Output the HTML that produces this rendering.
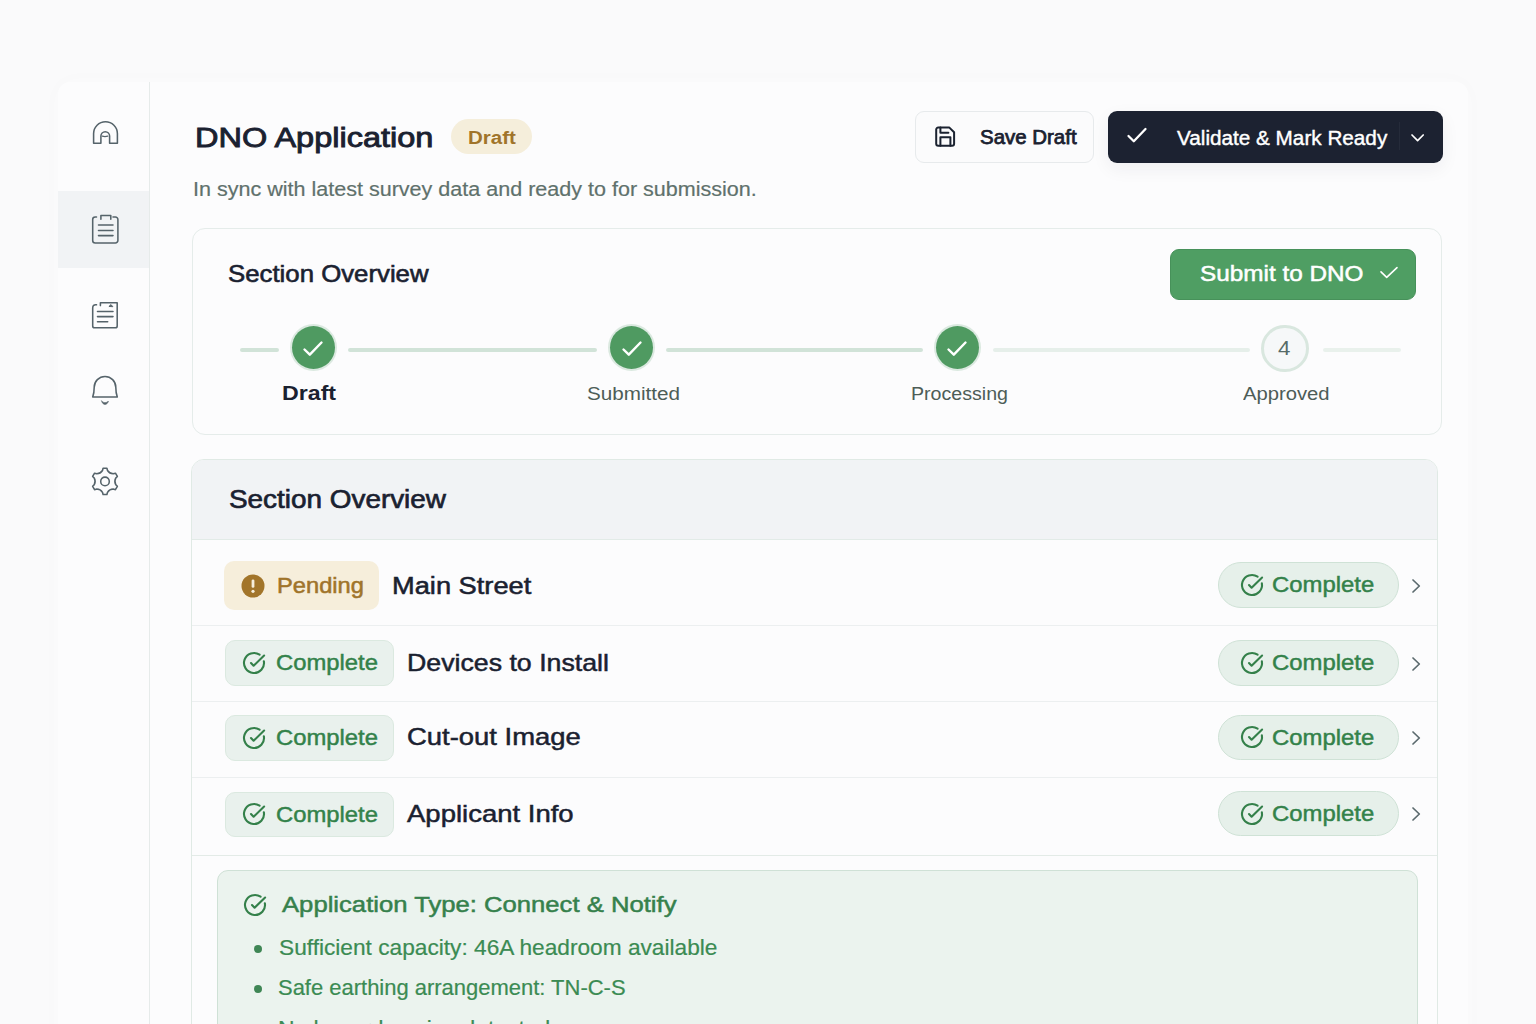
<!DOCTYPE html>
<html lang="en">
<head>
<meta charset="utf-8">
<title>DNO Application</title>
<style>
*{box-sizing:border-box;margin:0;padding:0}
html,body{width:1536px;height:1024px;overflow:hidden}
body{background:#fafafb;font-family:"Liberation Sans",sans-serif;color:#1b2230;position:relative}
.abs{position:absolute}
.t{position:absolute;white-space:nowrap;line-height:1;transform-origin:0 50%}
svg{display:block;overflow:visible;position:absolute}
.si{fill:none;stroke:#55636a;stroke-width:1.55;stroke-linejoin:round;stroke-linecap:round}
#shell{left:58px;top:82px;width:1410px;height:1000px;background:#fcfcfd;border-radius:12px 12px 0 0;box-shadow:0 0 24px 4px rgba(140,145,160,.012)}
#side{left:0;top:0;width:92px;height:1000px;border-right:1px solid #e6ebea;border-radius:12px 0 0 0}
#active{left:0;top:109px;width:91px;height:77px;background:#f1f3f5}
.step{width:43.400px;height:43.400px;border-radius:50%;background:#4f9a61;box-shadow:0 0 0 2px #dbe9e0}
.ln{height:4px;border-radius:2px;top:347.500px}
.lb{left:225px;width:169px;height:45.500px;border-radius:10px;background:#e9f1ed;border:1px solid #dbe9e0}
.rp{left:1218px;width:180.500px;height:46px;border-radius:23px;background:#e6f0ea;border:1px solid #cfe2d6}
.dv{left:0;width:1246px;height:1px;background:#eceff0}
.dot{left:254px;width:8px;height:8px;border-radius:50%;background:#3f8655}
.cc{fill:none;stroke:#34804a;stroke-width:2.100;stroke-linecap:round;stroke-linejoin:round}
.chev{fill:none;stroke:#5b6a6e;stroke-width:1.700;stroke-linecap:round;stroke-linejoin:round}
</style>
</head>
<body>

<div id="shell" class="abs">
  <div id="side" class="abs"><div id="active" class="abs"></div></div>
</div>

<!-- sidebar icons -->
<svg class="si" style="left:92px;top:120px" width="27" height="25" viewBox="0 0 27 25"><path d="M1.600 23.300V13.600A11.900 11.900 0 0 1 25.400 13.600V23.300H17.600V16A4.350 4.350 0 0 0 8.900 16V23.300Z"/><path d="M10.300 16.200q2.700 .9 5.400 0" stroke-width="1.400"/></svg>
<svg class="si" style="left:91px;top:213px" width="28" height="32" viewBox="0 0 28 32"><path d="M5.500 4H4.200A2.500 2.500 0 0 0 1.700 6.500V27.400A2.500 2.500 0 0 0 4.200 29.900H24.400A2.500 2.500 0 0 0 26.900 27.400V6.500A2.500 2.500 0 0 0 24.400 4H22"/><path d="M9.900 6.300V2.500H19.800V6.300"/><path d="M7.500 11.900H22M7.500 17.500H22M7.500 22.600H22"/></svg>
<svg class="si" style="left:91px;top:301px" width="28" height="29" viewBox="0 0 28 29"><path d="M5.500 3.800Q1.700 3.200 1.700 7V25A1.800 1.800 0 0 0 3.500 26.800H24.400A1.800 1.800 0 0 0 26.200 25V1.800H9.400V4.600"/><path d="M18.200 5.200l1.800-1.600 1.600 1.800z" fill="#55636a" stroke-width="1"/><path d="M6.500 10.500H22M6.500 15.600H22M6.500 20.700H16.700"/></svg>
<svg class="si" style="left:91px;top:374px" width="28" height="32" viewBox="0 0 28 32"><path d="M1.700 23Q3.200 19 3.200 13.300A10.800 10.800 0 0 1 24.800 13.300Q24.800 19 26.300 23Z"/><path d="M10.600 27C11.500 31.600 16.500 31.600 17.400 27C16 29.200 12 29.200 10.600 27Z" fill="#55636a" stroke-width=".6"/></svg>
<svg class="si" style="left:91px;top:467px" width="28" height="29" viewBox="0 0 28 29"><path d="M11.48 3.49 L12.08 1.24 L15.92 1.24 L16.52 3.49 Q18.50 6.61 22.19 6.76 L24.44 6.16 L26.36 9.48 L24.71 11.13 Q23.00 14.40 24.71 17.67 L26.36 19.32 L24.44 22.64 L22.19 22.04 Q18.50 22.19 16.52 25.31 L15.92 27.56 L12.08 27.56 L11.48 25.31 Q9.50 22.19 5.81 22.04 L3.56 22.64 L1.64 19.32 L3.29 17.67 Q5.00 14.40 3.29 11.13 L1.64 9.48 L3.56 6.16 L5.81 6.76 Q9.50 6.61 11.48 3.49 Z"/><circle cx="14" cy="14.400" r="4.300"/></svg>

<!-- header -->
<div class="t" id="title" style="left:194.51px;top:124.36px;font-size:27.99px;color:#1a2130;transform:scaleX(1.1607);-webkit-text-stroke:0.9px #1a2130">DNO Application</div>
<div class="abs" style="left:451px;top:118.500px;width:81px;height:35.500px;border-radius:18px;background:#f5eedb"></div>
<div class="t" id="draftb" style="left:467.51px;top:127.73px;font-size:19.1px;color:#a0742a;transform:scaleX(1.0738);font-weight:700">Draft</div>
<div class="t" id="sub" style="left:193.02px;top:178.88px;font-size:20.58px;color:#5f716c;transform:scaleX(1.0465);-webkit-text-stroke:0.2px #5f716c">In sync with latest survey data and ready to for submission.</div>

<div class="abs" style="left:915px;top:110.500px;width:179px;height:52px;border:1px solid #e7eaec;border-radius:9px;background:#fbfbfc"></div>
<svg style="left:934px;top:125px" width="22" height="23" viewBox="0 0 22 23" fill="none" stroke="#1b2230" stroke-width="2" stroke-linejoin="round" stroke-linecap="round"><path d="M4.200 2.600H15.400L20.100 7.200V18.700a2 2 0 0 1-2 2H4.200a2 2 0 0 1-2-2V4.600a2 2 0 0 1 2-2z"/><path d="M6.400 2.600V7.800H14.400"/><path d="M6.400 20.700V12.300H16.400V20.700"/></svg>
<div class="t" id="save" style="left:980.03px;top:127.75px;font-size:19.46px;color:#1a2130;transform:scaleX(1.0519);-webkit-text-stroke:0.75px #1a2130">Save Draft</div>

<div class="abs" style="left:1107.500px;top:110.500px;width:335.500px;height:52px;border-radius:9px;background:#1c2231;box-shadow:0 6px 18px rgba(30,35,50,.06)"></div>
<svg style="left:1127px;top:127px" width="20" height="17" viewBox="0 0 20 16" fill="none" stroke="#fff" stroke-width="2.300" stroke-linejoin="round" stroke-linecap="round"><path d="M1.500 8.500l5.300 5.200L18.500 1.500"/></svg>
<div class="t" id="valid" style="left:1177.20px;top:128.71px;font-size:19.95px;color:#ffffff;transform:scaleX(1.0386);-webkit-text-stroke:0.4px #ffffff">Validate &amp; Mark Ready</div>
<div class="abs" style="left:1399px;top:122px;width:1px;height:28px;background:#252b3a"></div>
<svg style="left:1411px;top:134px" width="14" height="8" viewBox="0 0 14 8" fill="none" stroke="#fff" stroke-width="1.700" stroke-linejoin="round" stroke-linecap="round"><path d="M1 1l5.600 5.600L12.200 1"/></svg>

<!-- card 1 -->
<div class="abs" style="left:191.500px;top:227.600px;width:1250.500px;height:207.900px;border:1px solid #e5ecea;border-radius:13px;background:#fcfcfd"></div>
<div class="t" id="so1" style="left:228.42px;top:261.53px;font-size:23.83px;color:#1a2130;transform:scaleX(1.0818);-webkit-text-stroke:0.6px #1a2130">Section Overview</div>
<div class="abs" style="left:1170px;top:249px;width:246px;height:50.500px;border-radius:9px;background:#4f9e63;border:1px solid #47915a"></div>
<div class="t" id="submit" style="left:1200.18px;top:262.10px;font-size:22.74px;color:#ffffff;transform:scaleX(1.0689);-webkit-text-stroke:0.5px #ffffff">Submit to DNO</div>
<svg style="left:1381px;top:267px" width="17" height="12" viewBox="0 0 17 12" fill="none" stroke="#fff" stroke-width="1.600" stroke-linejoin="round" stroke-linecap="round"><path d="M0 4.800L5.700 10.300L16 .600"/></svg>

<!-- stepper -->
<div class="abs ln" style="left:240px;width:38.500px;background:#d1e3d8"></div>
<div class="abs ln" style="left:347.500px;width:249.500px;background:#d1e3d8"></div>
<div class="abs ln" style="left:666px;width:256.500px;background:#d1e3d8"></div>
<div class="abs ln" style="left:992.500px;width:257px;background:#e6efea"></div>
<div class="abs ln" style="left:1322.500px;width:78px;background:#e9f1ec"></div>

<div class="abs step" style="left:291.500px;top:325.800px"></div>
<div class="abs step" style="left:609.800px;top:325.800px"></div>
<div class="abs step" style="left:935.600px;top:325.800px"></div>
<div class="abs" style="left:1261.100px;top:324.600px;width:47.700px;height:47.700px;border-radius:50%;border:3px solid #d9e7df;background:#f6f8f9"></div>
<div class="t" id="n4" style="left:1278.36px;top:338.30px;font-size:20.2px;color:#566b68;transform:scaleX(1.1068)">4</div>
<svg style="left:303px;top:340.500px" width="20" height="16" viewBox="0 0 20 16" fill="none" stroke="#fff" stroke-width="2.400" stroke-linejoin="round" stroke-linecap="round"><path d="M1.500 8.500l5.300 5.200L18.500 1.500"/></svg>
<svg style="left:621.500px;top:340.500px" width="20" height="16" viewBox="0 0 20 16" fill="none" stroke="#fff" stroke-width="2.400" stroke-linejoin="round" stroke-linecap="round"><path d="M1.500 8.500l5.300 5.200L18.500 1.500"/></svg>
<svg style="left:947.300px;top:340.500px" width="20" height="16" viewBox="0 0 20 16" fill="none" stroke="#fff" stroke-width="2.400" stroke-linejoin="round" stroke-linecap="round"><path d="M1.500 8.500l5.300 5.200L18.500 1.500"/></svg>
<div class="t" id="l1" style="left:281.81px;top:383.22px;font-size:20.3px;color:#1a2130;transform:scaleX(1.1425);font-weight:700">Draft</div>
<div class="t" id="l2" style="left:587.12px;top:384.80px;font-size:18.9px;color:#4d5d57;transform:scaleX(1.0941)">Submitted</div>
<div class="t" id="l3" style="left:911.24px;top:384.90px;font-size:18.9px;color:#4d5d57;transform:scaleX(1.0376)">Processing</div>
<div class="t" id="l4" style="left:1243.00px;top:384.90px;font-size:18.9px;color:#4d5d57;transform:scaleX(1.0703)">Approved</div>

<!-- card 2 -->
<div class="abs" style="left:191px;top:458.500px;width:1247px;height:600px;border:1px solid #e0eae5;border-radius:13px;background:#fcfcfd;overflow:hidden">
  <div class="abs" style="left:0;top:0;width:1246px;height:80.500px;background:#f1f3f5;border-bottom:1px solid #e2ebe7"></div>
  <div class="abs dv" style="top:165.600px"></div>
  <div class="abs dv" style="top:241.500px"></div>
  <div class="abs dv" style="top:317.500px"></div>
  <div class="abs dv" style="top:395.300px;background:#e3ebe7"></div>
</div>
<div class="t" id="so2" style="left:228.79px;top:487.22px;font-size:24.87px;color:#1a2130;transform:scaleX(1.1216);-webkit-text-stroke:0.65px #1a2130">Section Overview</div>

<!-- row 1 -->
<div class="abs" style="left:224.200px;top:560.500px;width:154.800px;height:49.500px;border-radius:10px;background:#f6eedb"></div>
<svg style="left:241.200px;top:573.700px" width="24" height="24" viewBox="0 0 24 24"><circle cx="12" cy="12" r="11.500" fill="#a2752a"/><rect x="10.600" y="5.400" width="2.800" height="8.400" rx="1.400" fill="#f6eedb"/><circle cx="12" cy="17.300" r="1.600" fill="#f6eedb"/></svg>
<div class="t" id="pend" style="left:276.55px;top:575.52px;font-size:21.24px;color:#a0742a;transform:scaleX(1.1157);-webkit-text-stroke:0.5px #a0742a">Pending</div>
<div class="t" id="r1" style="left:391.58px;top:574.19px;font-size:24.79px;color:#1a2130;transform:scaleX(1.0993);-webkit-text-stroke:0.55px #1a2130">Main Street</div>

<div class="abs lb" style="top:640px"></div>
<div class="abs lb" style="top:715px"></div>
<div class="abs lb" style="top:791.500px"></div>
<svg class="cc" style="left:241.800px;top:650.700px" width="24" height="24" viewBox="0 0 24 24"><path d="M17.600 3.700A10 10 0 1 0 21.850 10.260"/><path d="M9 12l2.600 2.750L22.100 4.600"/></svg>
<svg class="cc" style="left:241.800px;top:725.700px" width="24" height="24" viewBox="0 0 24 24"><path d="M17.600 3.700A10 10 0 1 0 21.850 10.260"/><path d="M9 12l2.600 2.750L22.100 4.600"/></svg>
<svg class="cc" style="left:241.800px;top:802px" width="24" height="24" viewBox="0 0 24 24"><path d="M17.600 3.700A10 10 0 1 0 21.850 10.260"/><path d="M9 12l2.600 2.750L22.100 4.600"/></svg>
<div class="t" id="c2" style="left:275.93px;top:652.34px;font-size:21.9px;color:#33824a;transform:scaleX(1.0883);-webkit-text-stroke:0.45px #33824a">Complete</div>
<div class="t" id="c3" style="left:275.93px;top:727.34px;font-size:21.9px;color:#33824a;transform:scaleX(1.0883);-webkit-text-stroke:0.45px #33824a">Complete</div>
<div class="t" id="c4" style="left:275.93px;top:803.84px;font-size:21.9px;color:#33824a;transform:scaleX(1.0883);-webkit-text-stroke:0.45px #33824a">Complete</div>
<div class="t" id="r2" style="left:406.76px;top:651.46px;font-size:24.44px;color:#1a2130;transform:scaleX(1.0933);-webkit-text-stroke:0.5px #1a2130">Devices to Install</div>
<div class="t" id="r3" style="left:406.50px;top:725.36px;font-size:24.44px;color:#1a2130;transform:scaleX(1.1221);-webkit-text-stroke:0.5px #1a2130">Cut-out Image</div>
<div class="t" id="r4" style="left:406.75px;top:801.86px;font-size:24.44px;color:#1a2130;transform:scaleX(1.1251);-webkit-text-stroke:0.5px #1a2130">Applicant Info</div>

<div class="abs rp" style="top:562px"></div>
<div class="abs rp" style="top:640px;height:45.500px"></div>
<div class="abs rp" style="top:714.800px;height:44.900px"></div>
<div class="abs rp" style="top:791.300px;height:45.200px"></div>
<svg class="cc" style="left:1240.100px;top:573.100px" width="24" height="24" viewBox="0 0 24 24"><path d="M17.600 3.700A10 10 0 1 0 21.850 10.260"/><path d="M9 12l2.600 2.750L22.100 4.600"/></svg>
<svg class="cc" style="left:1240.100px;top:651px" width="24" height="24" viewBox="0 0 24 24"><path d="M17.600 3.700A10 10 0 1 0 21.850 10.260"/><path d="M9 12l2.600 2.750L22.100 4.600"/></svg>
<svg class="cc" style="left:1240.100px;top:725.400px" width="24" height="24" viewBox="0 0 24 24"><path d="M17.600 3.700A10 10 0 1 0 21.850 10.260"/><path d="M9 12l2.600 2.750L22.100 4.600"/></svg>
<svg class="cc" style="left:1240.100px;top:801.500px" width="24" height="24" viewBox="0 0 24 24"><path d="M17.600 3.700A10 10 0 1 0 21.850 10.260"/><path d="M9 12l2.600 2.750L22.100 4.600"/></svg>
<div class="t" id="p1" style="left:1272.33px;top:574.14px;font-size:21.9px;color:#33824a;transform:scaleX(1.0905);-webkit-text-stroke:0.45px #33824a">Complete</div>
<div class="t" id="p2" style="left:1272.33px;top:652.14px;font-size:21.9px;color:#33824a;transform:scaleX(1.0905);-webkit-text-stroke:0.45px #33824a">Complete</div>
<div class="t" id="p3" style="left:1272.33px;top:727.14px;font-size:21.9px;color:#33824a;transform:scaleX(1.0905);-webkit-text-stroke:0.45px #33824a">Complete</div>
<div class="t" id="p4" style="left:1272.33px;top:803.44px;font-size:21.9px;color:#33824a;transform:scaleX(1.0905);-webkit-text-stroke:0.45px #33824a">Complete</div>
<svg class="chev" style="left:1411.500px;top:579px" width="9" height="14" viewBox="0 0 9 14"><path d="M1 1l6.300 6L1 13"/></svg>
<svg class="chev" style="left:1411.500px;top:657px" width="9" height="14" viewBox="0 0 9 14"><path d="M1 1l6.300 6L1 13"/></svg>
<svg class="chev" style="left:1411.500px;top:731.300px" width="9" height="14" viewBox="0 0 9 14"><path d="M1 1l6.300 6L1 13"/></svg>
<svg class="chev" style="left:1411.500px;top:806.900px" width="9" height="14" viewBox="0 0 9 14"><path d="M1 1l6.300 6L1 13"/></svg>

<!-- green panel -->
<div class="abs" style="left:216.500px;top:870px;width:1201.500px;height:200px;border:1px solid #cfe1d6;border-radius:11px;background:#ebf3ee"></div>
<svg class="cc" style="left:242.500px;top:893px" width="24" height="24" viewBox="0 0 24 24"><path d="M17.600 3.700A10 10 0 1 0 21.850 10.260"/><path d="M9 12l2.600 2.750L22.100 4.600"/></svg>
<div class="t" id="gt" style="left:282.05px;top:894.39px;font-size:22.64px;color:#36814c;transform:scaleX(1.1338);-webkit-text-stroke:0.5px #36814c">Application Type: Connect &amp; Notify</div>
<div class="t" id="g1" style="left:278.54px;top:937.69px;font-size:21.28px;color:#3b8b53;transform:scaleX(1.0667);-webkit-text-stroke:0.2px #3b8b53">Sufficient capacity: 46A headroom available</div>
<div class="t" id="g2" style="left:278.17px;top:978.39px;font-size:21.28px;color:#3b8b53;transform:scaleX(1.0329);-webkit-text-stroke:0.2px #3b8b53">Safe earthing arrangement: TN-C-S</div>
<div class="t" id="g3" style="left:277.87px;top:1019.49px;font-size:21.28px;color:#3b8b53;transform:scaleX(1.0763);-webkit-text-stroke:0.2px #3b8b53">No hazards noise detected</div>
<div class="abs dot" style="top:944.500px"></div>
<div class="abs dot" style="top:984.500px"></div>
<div class="abs dot" style="top:1024px"></div>
</body>
</html>
